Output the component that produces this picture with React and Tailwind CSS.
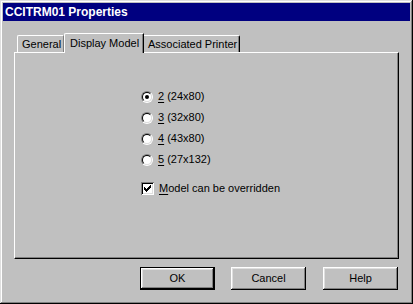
import React from "react";

function Radio({ checked }) {
  return (
    <div className="w-[12px] h-[12px] rounded-full border border-t-[#808080] border-l-[#808080] border-b-white border-r-white">
      <div className="w-full h-full rounded-full border border-t-black border-l-black border-b-[#dfdfdf] border-r-[#dfdfdf] bg-white flex items-center justify-center">
        {checked && <div className="w-[4px] h-[4px] rounded-full bg-black" />}
      </div>
    </div>
  );
}

function Checkbox() {
  return (
    <div className="w-[13px] h-[13px] bg-white shadow-[inset_1px_1px_0_#808080,inset_-1px_-1px_0_#fff,inset_2px_2px_0_#000,inset_-2px_-2px_0_#dfdfdf] flex items-center justify-center">
      <svg width="7" height="7" viewBox="0 0 7 7" shapeRendering="crispEdges">
        <path
          fill="#000"
          d="M6 0h1v3h-1zM5 1h1v3h-1zM4 2h1v3h-1zM3 3h1v3h-1zM2 4h1v3h-1zM1 3h1v3h-1zM0 2h1v3h-1z"
        />
      </svg>
    </div>
  );
}

function Button({ children, def, className = "" }) {
  return (
    <div
      className={
        "w-[75px] h-[23px] flex items-center justify-center bg-[#c0c0c0] " +
        (def
          ? "border border-black shadow-[inset_-1px_-1px_0_#000,inset_1px_1px_0_#fff,inset_-2px_-2px_0_#808080,inset_2px_2px_0_#dfdfdf] "
          : "shadow-[inset_-1px_-1px_0_#000,inset_1px_1px_0_#fff,inset_-2px_-2px_0_#808080,inset_2px_2px_0_#dfdfdf] ") +
        className
      }
    >
      {children}
    </div>
  );
}

export default function App() {
  const rows = [
    ["2", " (24x80)", true],
    ["3", " (32x80)", false],
    ["4", " (43x80)", false],
    ["5", " (27x132)", false],
  ];
  return (
    <div className="w-[413px] h-[304px] bg-[#c0c0c0] p-[3px] flex flex-col shadow-[inset_-1px_-1px_0_#000,inset_1px_1px_0_#dfdfdf,inset_-2px_-2px_0_#808080,inset_2px_2px_0_#fff] text-[11px] leading-none text-black font-['Liberation_Sans',Arial,sans-serif]">
      <div className="h-[18px] bg-[#000080] text-white font-bold text-[12px] flex items-center pl-[2px]">
        CCITRM01 Properties
      </div>

      <div className="mt-[12px] ml-[11px] flex items-end h-[19px] relative z-10">
        <div className="w-[3px]" />
        <div className="w-[47px] h-[17px] border-l border-t border-white rounded-tl-[2px] border-r border-r-[#808080] flex items-center pl-[4px] pt-[1px]">
          General
        </div>
        <div className="w-[80px] h-[20px] -mb-[1px] bg-[#c0c0c0] border-l border-t border-white rounded-tl-[2px] border-r border-r-black shadow-[inset_-1px_0_0_#808080] flex items-start pl-[5px] pt-[4px]">
          Display Model
        </div>
        <div className="w-[96px] h-[17px] border-t border-white rounded-tr-[2px] border-r border-r-black shadow-[inset_-1px_0_0_#808080] flex items-center pl-[4px] pt-[1px]">
          Associated Printer
        </div>
      </div>

      <div className="ml-[11px] w-[385px] h-[207px] border border-t-white border-l-white border-r-black border-b-black shadow-[inset_-1px_-1px_0_#808080] flex flex-col pl-[126px] pt-[33px]">
        {rows.map(([k, rest, c]) => (
          <div key={k} className="h-[21px] flex items-center">
            <Radio checked={c} />
            <span className="ml-[5px]">
              <span className="underline underline-offset-[2px]">{k}</span>
              {rest}
            </span>
          </div>
        ))}
        <div className="h-[21px] mt-[8px] flex items-center">
          <Checkbox />
          <span className="ml-[5px]">
            <span className="underline underline-offset-[2px]">M</span>odel can be overridden
          </span>
        </div>
      </div>

      <div className="mt-[8px] ml-[137px] flex">
        <Button def>OK</Button>
        <Button className="ml-[16px]">Cancel</Button>
        <Button className="ml-[17px]">Help</Button>
      </div>
    </div>
  );
}
